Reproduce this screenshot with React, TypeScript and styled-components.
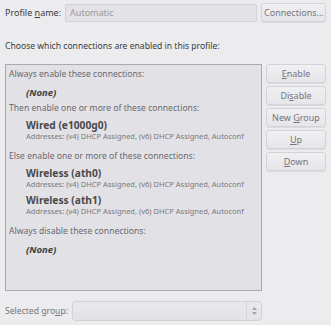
import React from 'react';
import styled, {createGlobalStyle} from 'styled-components';

const GlobalStyle = createGlobalStyle`
  html, body {
    margin: 0;
    padding: 0;
    background: #ecebee;
  }
  body {
    font-family: "Noto Sans", "DejaVu Sans", sans-serif;
    font-size: 8.6px;
    color: #3c3c3c;
  }
`;

const Window = styled.div`
  width: 331px;
  height: 325px;
  box-sizing: border-box;
  padding: 3px 5px 0 5px;
  display: flex;
  flex-direction: column;
`;

const Row = styled.div`
  display: flex;
  align-items: center;
  gap: 4px;
`;

const Label = styled.span<{dim?: boolean; size?: number}>`
  white-space: nowrap;
  font-size: ${p => (p.size ? `${p.size}px` : 'inherit')};
  color: ${p => (p.dim ? '#77767c' : '#3c3c3c')};
`;

const TextInput = styled.div`
  flex: 1;
  height: 18px;
  box-sizing: border-box;
  border: 1px solid #d2d1d6;
  border-radius: 2px;
  background: #e3e2e6;
  color: #9a999e;
  font-size: 9px;
  padding: 0 4px;
  display: flex;
  align-items: center;
`;

const Button = styled.button<{w: number}>`
  font-family: inherit;
  font-size: 9px;
  color: #77767c;
  height: 19px;
  line-height: 17px;
  box-sizing: border-box;
  width: ${p => p.w}px;
  border: 1px solid #d3d2d7;
  border-radius: 3px;
  background: linear-gradient(#f0eff2, #e6e5e9);
  box-shadow: 0 1px 0 #dcdbe0;
  padding: 0 2px;
  text-align: center;
  white-space: nowrap;
`;

const Intro = styled.div`
  margin-top: 19px;
  height: 11px;
  line-height: 11px;
`;

const Main = styled.div`
  margin-top: 12px;
  display: flex;
  gap: 4px;
`;

const ListPanel = styled.div`
  width: 257px;
  height: 227px;
  box-sizing: border-box;
  border: 1px solid #a9a9af;
  background: #e2e1e5;
  padding: 4px 0 0 3px;
  color: #6a696e;
`;

const GroupTitle = styled.div`
  line-height: 11px;
`;

const NoneItem = styled.div`
  font-weight: bold;
  font-style: italic;
  font-size: 9.5px;
  color: #3e3e40;
  padding-left: 17px;
  line-height: 11px;
  margin: 7px 0 5px;
`;

const ConnList = styled.div`
  margin: 5px 0 10px;
  display: flex;
  flex-direction: column;
  gap: 5px;
`;

const Conn = styled.div`
  padding-left: 17px;
`;

const ConnName = styled.div`
  font-weight: bold;
  font-size: 10.2px;
  color: #4a494d;
  line-height: 12px;
`;

const ConnAddr = styled.div`
  font-size: 7.5px;
  color: #7a797e;
  line-height: 10px;
`;

const Side = styled.div`
  display: flex;
  flex-direction: column;
  gap: 3px;
`;

const Bottom = styled.div`
  margin-top: 10px;
  width: 257px;
  display: flex;
  align-items: center;
  gap: 4px;
`;

const Combo = styled.div`
  flex: 1;
  height: 20px;
  box-sizing: border-box;
  border: 1px solid #d3d2d7;
  border-radius: 3px;
  background: linear-gradient(#e9e8ec, #e3e2e6);
  display: flex;
  justify-content: flex-end;
`;

const Spin = styled.div`
  width: 14px;
  border-left: 1px solid #d6d5da;
  display: flex;
  flex-direction: column;
  align-items: center;
  justify-content: center;
  gap: 2px;
`;

const U = styled.span`
  text-decoration: underline;
`;

const ADDR = 'Addresses: (v4) DHCP Assigned, (v6) DHCP Assigned, Autoconf';

export default function App() {
  return (
    <>
      <GlobalStyle />
      <Window>
        <Row>
          <Label size={9}>Profile <U>n</U>ame:</Label>
          <TextInput>Automatic</TextInput>
          <Button w={65}>Connections...</Button>
        </Row>
        <Intro>Choose which connections are enabled in this profile:</Intro>
        <Main>
          <ListPanel>
            <GroupTitle>Always enable these connections:</GroupTitle>
            <NoneItem>(None)</NoneItem>
            <GroupTitle>Then enable one or more of these connections:</GroupTitle>
            <ConnList>
              <Conn>
                <ConnName>Wired (e1000g0)</ConnName>
                <ConnAddr>{ADDR}</ConnAddr>
              </Conn>
            </ConnList>
            <GroupTitle>Else enable one or more of these connections:</GroupTitle>
            <ConnList>
              {['Wireless (ath0)', 'Wireless (ath1)'].map(n => (
                <Conn key={n}>
                  <ConnName>{n}</ConnName>
                  <ConnAddr>{ADDR}</ConnAddr>
                </Conn>
              ))}
            </ConnList>
            <GroupTitle>Always disable these connections:</GroupTitle>
            <NoneItem>(None)</NoneItem>
          </ListPanel>
          <Side>
            <Button w={60}><U>E</U>nable</Button>
            <Button w={60}>Di<U>s</U>able</Button>
            <Button w={60}>New <U>G</U>roup</Button>
            <Button w={60}><U>U</U>p</Button>
            <Button w={60}><U>D</U>own</Button>
          </Side>
        </Main>
        <Bottom>
          <Label dim>Selected gro<U>u</U>p:</Label>
          <Combo>
            <Spin>
              <svg width="5" height="3" viewBox="0 0 5 3"><path d="M0 3 L2.5 0 L5 3Z" fill="#a5a4a9" /></svg>
              <svg width="5" height="3" viewBox="0 0 5 3"><path d="M0 0 L2.5 3 L5 0Z" fill="#a5a4a9" /></svg>
            </Spin>
          </Combo>
        </Bottom>
      </Window>
    </>
  );
}
